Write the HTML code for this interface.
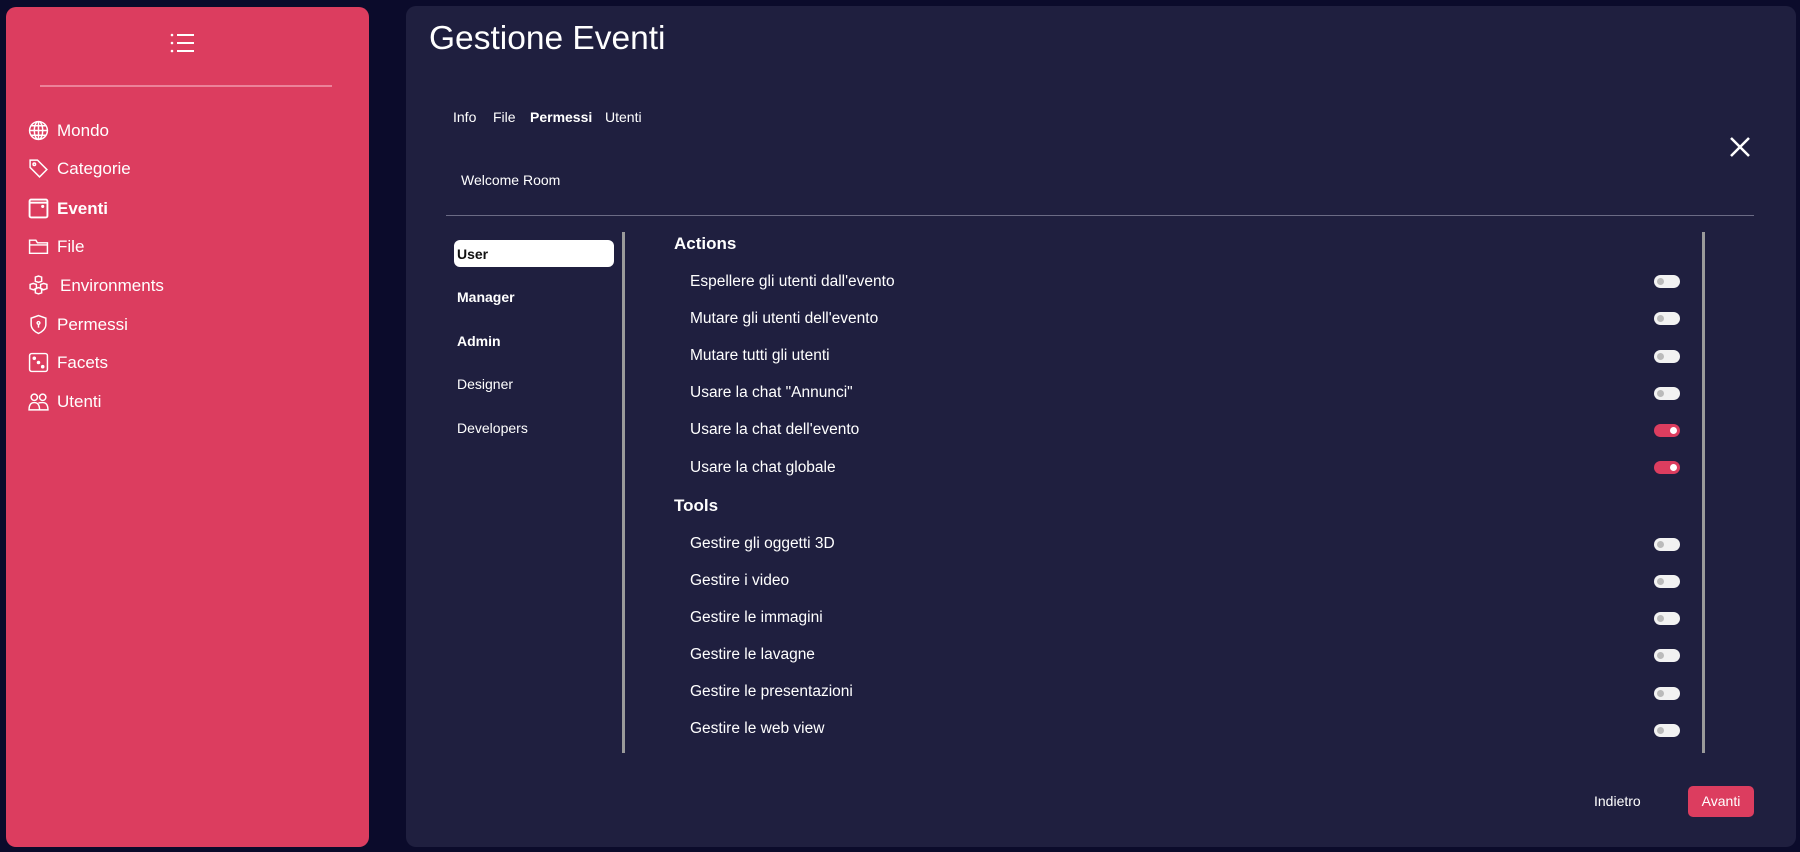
<!DOCTYPE html>
<html><head><meta charset="utf-8"><style>
*{margin:0;padding:0;box-sizing:border-box}
body{width:1800px;height:852px;background:#0b0b2b;font-family:"Liberation Sans",sans-serif;color:#fff;position:relative;overflow:hidden}
.abs{position:absolute}
#side{left:6px;top:7px;width:363px;height:840px;background:#dc3d5f;border-radius:10px}
#main{left:406px;top:6px;width:1390px;height:841px;background:#1f1f3f;border-radius:10px}
.mi{position:absolute;left:28px;display:flex;align-items:center;font-size:17px;white-space:nowrap}
.mi svg{width:21px;height:21px;margin-right:8px;fill:none;stroke:#fff;stroke-width:1.4}
.t{position:absolute;font-size:14px;white-space:nowrap}
.row{position:absolute;left:690px;font-size:15.5px;white-space:nowrap}
.tg{position:absolute;left:1654px;width:26px;height:13px;border-radius:7px;background:#f2f2f2}
.tg::after{content:"";position:absolute;left:3px;top:3px;width:7px;height:7px;border-radius:50%;background:#bbb}
.tg.on{background:#dc3d5f}
.tg.on::after{left:16px;background:#fff}
.li{position:absolute;left:457px;font-size:14px}
</style></head><body>
<div id="side" class="abs"></div>
<div id="main" class="abs"></div>
<svg class="abs" style="left:170px;top:33px" width="26" height="20" viewBox="0 0 26 20" stroke="#fff" stroke-width="2"><circle cx="2" cy="2" r="1.3" fill="#fff" stroke="none"/><circle cx="2" cy="10" r="1.3" fill="#fff" stroke="none"/><circle cx="2" cy="18" r="1.3" fill="#fff" stroke="none"/><path d="M7 2H24M7 10H24M7 18H24"/></svg>
<div class="abs" style="left:40px;top:85px;width:292px;height:2px;background:#ec8299"></div>
<div class="mi" style="top:120px"><svg viewBox="0 0 20 20"><circle cx="10" cy="10" r="8.5"/><ellipse cx="10" cy="10" rx="4" ry="8.5"/><path d="M1.5 10H18.5M3 5.5H17M3 14.5H17M10 1.5V18.5"/></svg>Mondo</div>
<div class="mi" style="top:158px"><svg viewBox="0 0 20 20"><path d="M2 2H9L18 11L11 18L2 9Z"/><circle cx="6" cy="6" r="1.2"/></svg>Categorie</div>
<div class="mi" style="top:198px;font-weight:bold"><svg viewBox="0 0 20 20" style="stroke-width:1.8"><rect x="1.5" y="1.5" width="17" height="17" rx="1.5"/><path d="M1.5 4.5H18.5"/><circle cx="14" cy="8" r=".6" fill="#fff"/></svg>Eventi</div>
<div class="mi" style="top:236px"><svg viewBox="0 0 20 20"><path d="M1.5 4V16.5H18.5V6.5H9L7.5 4Z M1.5 8.5H18.5"/></svg>File</div>
<div class="mi" style="top:275px"><svg viewBox="0 0 20 20"><path d="M7 2L10 1L13 2V6L10 7L7 6ZM2 9L5 8L8 9V13L5 14L2 13ZM12 9L15 8L18 9V13L15 14L12 13ZM7 13L10 12L13 13V17L10 18L7 17Z"/></svg><span style="margin-left:3px">Environments</span></div>
<div class="mi" style="top:314px"><svg viewBox="0 0 20 20"><path d="M10 1.5L17 4V10C17 14 13.5 17 10 18.5C6.5 17 3 14 3 10V4Z"/><circle cx="10" cy="8.5" r="1.3"/><path d="M10 10V13"/></svg>Permessi</div>
<div class="mi" style="top:352px"><svg viewBox="0 0 20 20"><rect x="1.5" y="1.5" width="17" height="17" rx="2"/><circle cx="6" cy="6" r="1" fill="#fff"/><circle cx="10" cy="10" r="1" fill="#fff"/><circle cx="14" cy="14" r="1" fill="#fff"/></svg>Facets</div>
<div class="mi" style="top:391px"><svg viewBox="0 0 20 20"><circle cx="6" cy="6" r="3"/><circle cx="14" cy="6" r="3"/><path d="M1 18C1 13 3 11 6 11C9 11 11 13 11 18ZM10 11.5C11 11 12.5 11 14 11C17 11 19 13 19 18H11"/></svg>Utenti</div>

<div class="abs" style="left:429px;top:20px;font-size:33.5px">Gestione Eventi</div>
<div class="t" style="left:453px;top:109px">Info</div>
<div class="t" style="left:493px;top:109px">File</div>
<div class="t" style="left:530px;top:109px;font-weight:bold">Permessi</div>
<div class="t" style="left:605px;top:109px">Utenti</div>
<svg class="abs" style="left:1730px;top:137px" width="20" height="20" stroke="#fff" stroke-width="2.5"><path d="M1 1L19 19M19 1L1 19"/></svg>
<div class="t" style="left:461px;top:172px">Welcome Room</div>
<div class="abs" style="left:446px;top:215px;width:1308px;height:1px;background:#6b6b85"></div>

<div class="abs" style="left:454px;top:240px;width:160px;height:27px;background:#fff;border-radius:6px"></div>
<div class="li" style="top:246px;color:#111;font-weight:bold">User</div>
<div class="li" style="top:289px;font-weight:bold">Manager</div>
<div class="li" style="top:333px;font-weight:bold">Admin</div>
<div class="li" style="top:376px">Designer</div>
<div class="li" style="top:420px">Developers</div>
<div class="abs" style="left:622px;top:232px;width:3px;height:521px;background:#9a9a9a"></div>
<div class="abs" style="left:1702px;top:232px;width:3px;height:521px;background:#9a9a9a"></div>

<div class="abs" style="left:674px;top:234px;font-size:17px;font-weight:bold">Actions</div>
<div class="row" style="top:273px">Espellere gli utenti dall'evento</div>
<div class="row" style="top:310px">Mutare gli utenti dell'evento</div>
<div class="row" style="top:347px">Mutare tutti gli utenti</div>
<div class="row" style="top:384px">Usare la chat "Annunci"</div>
<div class="row" style="top:421px">Usare la chat dell'evento</div>
<div class="row" style="top:459px">Usare la chat globale</div>
<div class="abs" style="left:674px;top:496px;font-size:17px;font-weight:bold">Tools</div>
<div class="row" style="top:535px">Gestire gli oggetti 3D</div>
<div class="row" style="top:572px">Gestire i video</div>
<div class="row" style="top:609px">Gestire le immagini</div>
<div class="row" style="top:646px">Gestire le lavagne</div>
<div class="row" style="top:683px">Gestire le presentazioni</div>
<div class="row" style="top:720px">Gestire le web view</div>

<div class="tg" style="top:275px"></div>
<div class="tg" style="top:312px"></div>
<div class="tg" style="top:350px"></div>
<div class="tg" style="top:387px"></div>
<div class="tg on" style="top:424px"></div>
<div class="tg on" style="top:461px"></div>
<div class="tg" style="top:538px"></div>
<div class="tg" style="top:575px"></div>
<div class="tg" style="top:612px"></div>
<div class="tg" style="top:649px"></div>
<div class="tg" style="top:687px"></div>
<div class="tg" style="top:724px"></div>

<div class="t" style="left:1594px;top:793px">Indietro</div>
<div class="abs" style="left:1688px;top:786px;width:66px;height:31px;background:#dc3d5f;border-radius:5px;font-size:14px;text-align:center;line-height:31px">Avanti</div>
</body></html>
